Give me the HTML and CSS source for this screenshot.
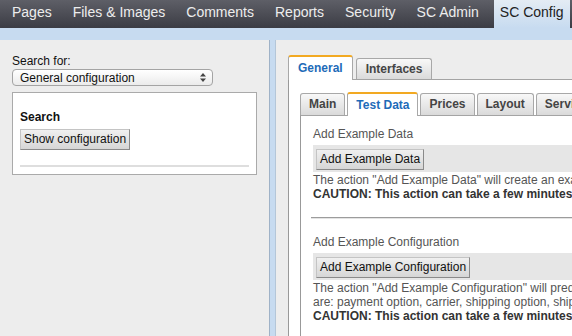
FILE: index.html
```html
<!DOCTYPE html>
<html lang="en">
  <head>
    <meta charset="UTF-8" />
    <meta name="viewport" content="width=device-width, initial-scale=1.0" />
    <title>SC Config</title>
    <link rel="stylesheet" href="styles.css">
  </head>
  <body>
    <nav class="topnav">
      <a href="#">Pages</a>
      <a href="#">Files &amp; Images</a>
      <a href="#">Comments</a>
      <a href="#">Reports</a>
      <a href="#">Security</a>
      <a href="#">SC Admin</a>
      <a href="#" class="active">SC Config</a>
    </nav>

    <div class="workspace">
      <aside class="side">
        <div class="field-label">Search for:</div>
        <div class="select">
          <span>General configuration</span>
          <svg width="6" height="9" viewBox="0 0 6 9">
            <path d="M3 0 L6 3.5 L0 3.5 Z M0 5.5 L6 5.5 L3 9 Z" fill="#444" />
          </svg>
        </div>
        <div class="search-box">
          <h3>Search</h3>
          <button class="btn">Show configuration</button>
          <div class="box-rule"></div>
        </div>
      </aside>

      <div class="splitter"></div>

      <main class="main">
        <div class="tabs">
          <div class="tab active">General</div>
          <div class="tab">Interfaces</div>
        </div>
        <div class="tab-body">
          <div class="tabs">
            <div class="tab">Main</div>
            <div class="tab active">Test Data</div>
            <div class="tab">Prices</div>
            <div class="tab">Layout</div>
            <div class="tab">Services</div>
          </div>
          <div class="inner-body">
            <div class="action-label">Add Example Data</div>
            <div class="action-bar">
              <button class="btn">Add Example Data</button>
            </div>
            <div class="desc">
              The action "Add Example Data" will create an example shop with products and categories.<br>
              <strong>CAUTION: This action can take a few minutes!</strong>
            </div>

            <div class="separator"></div>

            <div class="action-label">Add Example Configuration</div>
            <div class="action-bar">
              <button class="btn">Add Example Configuration</button>
            </div>
            <div class="desc">
              The action "Add Example Configuration" will predefine several configuration items. These items<br>
              are: payment option, carrier, shipping option, shipping cost and tax.<br>
              <strong>CAUTION: This action can take a few minutes!</strong>
            </div>
          </div>
        </div>
      </main>
    </div>
  </body>
</html>
```

FILE: styles.css
```css
body {
  font-family: "Liberation Sans", Arial, sans-serif;
  font-size: 12px;
  background: #c7dbf0;
  margin: 0;
  height: 100vh;
  overflow: hidden;
  display: flex;
  flex-direction: column;
}

.topnav {
  display: flex;
  gap: 9px;
  height: 28px;
  padding-left: 6px;
  background: linear-gradient(#5e5f67, #3b3c44);
  flex: none;
}

.topnav a {
  padding: 0 6px;
  font-size: 14px;
  line-height: 24px;
  color: #ededed;
  text-decoration: none;
}

.topnav a.active {
  background: linear-gradient(#e4ecf4, #c7dbf0);
  color: #222;
}

.workspace {
  flex: 1;
  display: flex;
  margin-top: 12px;
  min-height: 0;
}

.side {
  width: 269px;
  flex: none;
  box-sizing: border-box;
  padding: 14px 12px;
  background: #ededed;
}

.field-label {
  color: #111;
  line-height: 14px;
}

.select {
  display: flex;
  justify-content: space-between;
  align-items: center;
  width: 201px;
  height: 17px;
  box-sizing: border-box;
  margin-top: 1px;
  padding: 0 6px 0 7px;
  border: 1px solid #a4a4a4;
  border-radius: 4px;
  background: linear-gradient(#ffffff, #ebebeb);
  color: #111;
}

.search-box {
  margin-top: 6px;
  padding: 17px 7px 7px;
  background: #fff;
  border: 1px solid #aaa;
}

.search-box h3 {
  margin: 0 0 5px;
  font-size: 12px;
  line-height: 14px;
  color: #111;
}

.box-rule {
  height: 2px;
  margin-top: 15px;
  background: #dedede;
}

.btn {
  font-family: "Liberation Sans", Arial, sans-serif;
  font-size: 12px;
  line-height: 14px;
  color: #111;
  padding: 2px 3px 3px;
  border: 1px solid;
  border-color: #c4c4c4 #8a8a8a #8a8a8a #c4c4c4;
  background: linear-gradient(#f0f0f0, #d6d6d6);
}

.splitter {
  width: 5px;
  flex: none;
  border-left: 1px solid #9fb2c7;
}

.main {
  width: 640px;
  flex: none;
  display: flex;
  flex-direction: column;
  padding: 15px 0 0 12px;
  background: #ededed;
  border-left: 1px solid #b4c6d8;
  box-sizing: border-box;
}

.tabs {
  display: flex;
  align-items: flex-end;
  gap: 3px;
}

.tab {
  padding: 0 9px;
  border: 1px solid #a8a8a8;
  border-bottom: none;
  border-radius: 3px 3px 0 0;
  background: linear-gradient(#f8f8f8, #dadada);
  color: #444;
  font-weight: bold;
  line-height: 20px;
}

.tab.active {
  position: relative;
  margin-bottom: -1px;
  padding-bottom: 1px;
  border-top: 2px solid #f2a922;
  background: #fff;
  color: #1d6bb8;
  line-height: 22px;
}

.tab-body .tabs {
  gap: 2px;
}

.tab-body .tab {
  padding: 0 8px;
  line-height: 21px;
}

.tab-body .tab.active {
  line-height: 22px;
}

.tab-body {
  flex: 1;
  display: flex;
  flex-direction: column;
  padding: 12px 0 0 11px;
  background: #fff;
  border-top: 1px solid #a4a4a4;
  border-left: 1px solid #999;
}

.inner-body {
  flex: 1;
  padding: 11px 0 0 12px;
  border-top: 1px solid #a4a4a4;
  border-left: 1px solid #999;
  white-space: nowrap;
}

.action-label {
  color: #555;
  line-height: 14px;
}

.action-bar {
  margin-top: 4px;
  padding: 4px 3px 2px;
  background: #e6e6e6;
}

.desc {
  margin-top: 1px;
  color: #555;
  line-height: 14px;
}

.desc strong {
  color: #333;
}

.separator {
  margin: 16px 0 16px -2px;
  border-top: 1px solid #9c9c9c;
  border-bottom: 1px solid #e4e4e4;
}
```
